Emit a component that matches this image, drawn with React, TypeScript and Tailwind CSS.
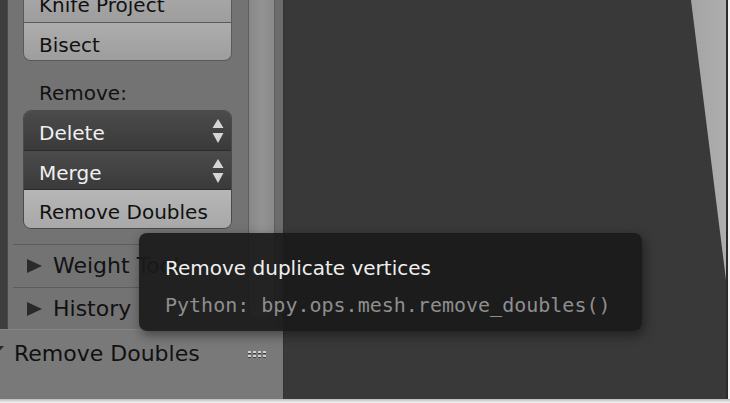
import React from "react";

const sans = "font-['DejaVu_Sans','Liberation_Sans',sans-serif]";
const mono = "font-['DejaVu_Sans_Mono','Liberation_Mono',monospace]";

const Arrows = () => (
  <svg width="12" height="26" viewBox="0 0 12 26" className="absolute right-[7px] top-[8px]">
    <polygon points="6,0 11.5,9 0.5,9" fill="#d6d6d6" />
    <polygon points="0.5,14 11.5,14 6,24" fill="#d6d6d6" />
  </svg>
);

const RightTri = () => (
  <svg width="15" height="14" viewBox="0 0 15 14" className="shrink-0">
    <polygon points="0,0 15,7 0,14" fill="#2a2a2a" />
  </svg>
);

const LightButton = ({ label, top }: { label: string; top?: boolean }) => (
  <div
    className={`h-[39px] pl-[15px] pt-[5px] leading-[34px] text-[20px] text-[#111] bg-gradient-to-b from-[#adadad] to-[#9d9d9d] ${
      top ? "" : "border-t border-[#5a5a5a]"
    }`}
  >
    {label}
  </div>
);

const DarkDropdown = ({ label, first }: { label: string; first?: boolean }) => (
  <div
    className={`relative h-[39px] pl-[15px] pt-[5px] leading-[34px] text-[20px] text-[#f0f0f0] bg-gradient-to-b from-[#4b4b4b] to-[#3a3a3a] ${
      first ? "" : "border-t border-[#2c2c2c]"
    }`}
  >
    {label}
    <Arrows />
  </div>
);

const Grip = () => (
  <div className="grid grid-cols-4 gap-x-[2px] gap-y-[1px]">
    {Array.from({ length: 8 }).map((_, i) => (
      <div key={i} className="w-[3px] h-[3px] bg-[#d0d0d0] border-b border-[#444]" />
    ))}
  </div>
);

export default function App() {
  return (
    <div className={`relative w-[730px] h-[403px] overflow-hidden bg-[#f4f4f4] ${sans}`}>
      <div className="flex w-[728px] h-[399px] border-r-2 border-[#2b2b2b]">
        {/* left tool shelf */}
        <div className="flex flex-col w-[283px] shrink-0">
          <div className="flex h-[329px] overflow-hidden">
            <div className="w-[8px] bg-[#3e3e3e] border-r border-[#4a4a4a]" />
            <div className="flex-1 bg-[#737373] flex flex-col">
              <div className="mt-[-17px] ml-[15px] mr-[16px] rounded-b-[8px] overflow-hidden border border-t-0 border-[#5a5a5a]">
                <LightButton label="Knife Project" top />
                <LightButton label="Bisect" />
              </div>
              <div className="mt-[20px] ml-[31px] h-[24px] leading-[24px] text-[20px] text-[#111]">
                Remove:
              </div>
              <div className="mt-[5px] ml-[15px] mr-[16px] rounded-[8px] overflow-hidden border border-[#4a4a4a]">
                <DarkDropdown label="Delete" first />
                <DarkDropdown label="Merge" />
                <div className="h-[39px] pl-[15px] pt-[5px] leading-[34px] text-[20px] text-[#111] bg-gradient-to-b from-[#b6b6b6] to-[#a8a8a8] border-t border-[#2c2c2c]">
                  Remove Doubles
                </div>
              </div>
              <div className="mt-[15px] ml-[5px] mr-[6px] border-t border-[#5c5c5c]" />
              <div className="flex items-center gap-[11px] h-[43px] pl-[19px] text-[22px] text-[#111] whitespace-nowrap">
                <RightTri />
                Weight Tools
              </div>
              <div className="ml-[5px] mr-[6px] border-t border-[#5c5c5c]" />
              <div className="flex items-center gap-[11px] h-[41px] pl-[19px] text-[22px] text-[#111]">
                <RightTri />
                History
              </div>
            </div>
            <div className="flex w-[35px] bg-[#737373]">
              <div className="w-[27px] h-[319px] bg-gradient-to-r from-[#878787] via-[#939393] to-[#8a8a8a] border-x border-[#5e5e5e] rounded-b-[12px]" />
              <div className="flex-1 bg-[#6c6c6c]" />
            </div>
          </div>
          <div className="relative flex-1 bg-[#797979] border-t border-[#858585] flex items-start">
            <svg width="14" height="8" viewBox="0 0 14 8" className="absolute left-[-10px] top-[16px]">
              <polygon points="0,0 14,0 7,8" fill="#2a2a2a" />
            </svg>
            <div className="h-[48px] leading-[48px] pl-[14px] text-[22px] text-[#111] flex-1">
              Remove Doubles
            </div>
            <div className="mt-[21px] mr-[17px]">
              <Grip />
            </div>
          </div>
        </div>
        {/* 3d viewport */}
        <div className="relative flex-1 bg-[#393939] border-l border-[#333]">
          <svg width="444" height="290" viewBox="0 0 444 290" className="absolute right-0 top-0">
            <defs>
              <linearGradient id="tri" x1="0" y1="0" x2="1" y2="0">
                <stop offset="0" stopColor="#a4a4a4" />
                <stop offset="1" stopColor="#aeaeae" />
              </linearGradient>
            </defs>
            <polygon points="409,0 444,0 444,280" fill="url(#tri)" />
          </svg>
        </div>
      </div>
      <div className="absolute bottom-0 left-0 w-full h-[4px] bg-gradient-to-b from-[#bdbdbd] to-[#f4f4f4]" />

      {/* tooltip */}
      <div className="absolute left-[139px] top-[233px] w-[503px] h-[98px] rounded-[8px] bg-[rgba(26,26,26,0.92)] shadow-[2px_4px_12px_rgba(0,0,0,0.45)] pl-[26px] pt-[23px]">
        <div className="h-[24px] leading-[24px] text-[20px] text-[#efefef] whitespace-nowrap">
          Remove duplicate vertices
        </div>
        <div className={`mt-[13px] h-[24px] leading-[24px] text-[20px] text-[#8e8e8e] whitespace-nowrap ${mono}`}>
          Python: bpy.ops.mesh.remove_doubles()
        </div>
      </div>
    </div>
  );
}
